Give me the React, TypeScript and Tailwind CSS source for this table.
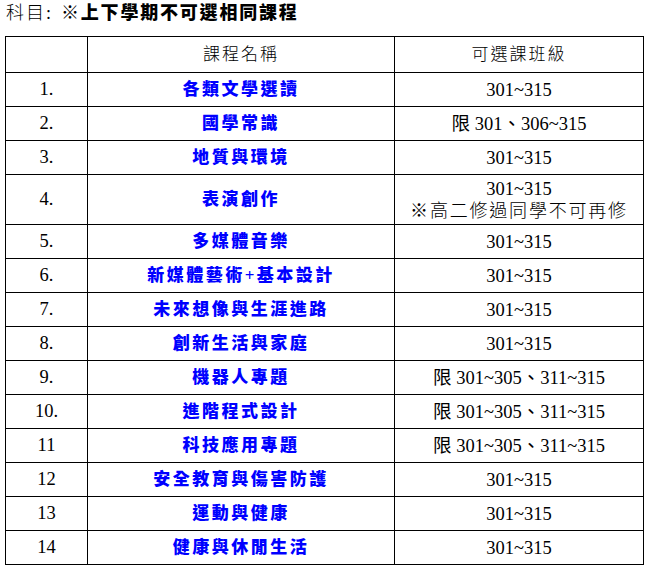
const rows: { no: string; name: string; classes: string[] }[] = [
  { no: '1.', name: '各類文學選讀', classes: ['301~315'] },
  { no: '2.', name: '國學常識', classes: ['限 301、306~315'] },
  { no: '3.', name: '地質與環境', classes: ['301~315'] },
  { no: '4.', name: '表演創作', classes: ['301~315', '※高二修過同學不可再修'] },
  { no: '5.', name: '多媒體音樂', classes: ['301~315'] },
  { no: '6.', name: '新媒體藝術+基本設計', classes: ['301~315'] },
  { no: '7.', name: '未來想像與生涯進路', classes: ['301~315'] },
  { no: '8.', name: '創新生活與家庭', classes: ['301~315'] },
  { no: '9.', name: '機器人專題', classes: ['限 301~305、311~315'] },
  { no: '10.', name: '進階程式設計', classes: ['限 301~305、311~315'] },
  { no: '11', name: '科技應用專題', classes: ['限 301~305、311~315'] },
  { no: '12', name: '安全教育與傷害防護', classes: ['301~315'] },
  { no: '13', name: '運動與健康', classes: ['301~315'] },
  { no: '14', name: '健康與休閒生活', classes: ['301~315'] },
]

export default function App() {
  return (
    <div className="min-h-[571px] w-[650px] bg-white text-black font-['Liberation_Serif','Noto_Sans_CJK_TC',serif]">
      {/* Title */}
      <div className="flex h-[26px] items-center pl-[6px] pt-px text-[18px]">
        <span className="font-light tracking-[2px]">科目:</span>
        <span className="ml-[8px] font-black tracking-[1.8px]">※上下學期不可選相同課程</span>
      </div>

      {/* Table */}
      <table className="ml-[5px] mt-[10px] w-[638px] table-fixed border-collapse">
        <colgroup>
          <col className="w-[82px]" />
          <col className="w-[307px]" />
          <col className="w-[249px]" />
        </colgroup>
        <thead>
          <tr className="h-[36px]">
            <th className="border border-black" />
            <th className="border border-black text-[17px] font-light tracking-[2px]">課程名稱</th>
            <th className="border border-black text-[17px] font-light tracking-[2px]">可選課班級</th>
          </tr>
        </thead>
        <tbody>
          {rows.map((r) => (
            <tr key={r.no} className={r.classes.length > 1 ? 'h-[50px]' : 'h-[34px]'}>
              <td className="border border-black text-center text-[18.5px] leading-none">{r.no}</td>
              <td className="border border-black text-center text-[17px] font-black tracking-[2.5px] text-[#0000ff] leading-none">
                {r.name}
              </td>
              <td className="border border-black text-center text-[18.5px] leading-[22px]">
                {r.classes.map((c) => (
                  <div key={c} className={c.startsWith('※') ? 'text-[18px] font-light tracking-[1.8px]' : ''}>
                    {c}
                  </div>
                ))}
              </td>
            </tr>
          ))}
        </tbody>
      </table>
    </div>
  )
}
